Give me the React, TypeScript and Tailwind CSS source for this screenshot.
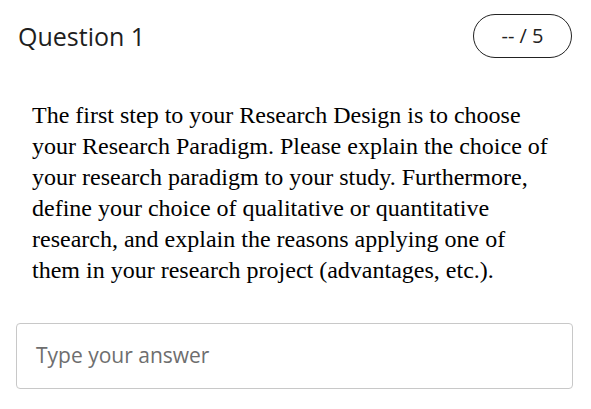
export default function App() {
  const lines = [
    "The first step to your Research Design is to choose",
    "your Research Paradigm. Please explain the choice of",
    "your research paradigm to your study. Furthermore,",
    "define your choice of qualitative or quantitative",
    "research, and explain the reasons applying one of",
    "them in your research project (advantages, etc.).",
  ];
  return (
    <div className="w-[591px] h-[409px] bg-white overflow-hidden relative">
      <div className="flex items-center justify-between pl-[18px] pr-[19px] pt-[14px]">
        <div className="text-[25px] leading-[44px] font-medium text-[#1e1e1e] font-['Open_Sans',sans-serif]">Question 1</div>
        <div className="w-[99px] h-[44px] border-[1.5px] border-[#222] rounded-full flex items-center justify-center text-[20px] text-[#222] font-['Open_Sans',sans-serif]">-- / 5</div>
      </div>
      <div className="pl-[32px] pt-[42px] text-[24px] leading-[31px] text-black font-['Liberation_Serif',serif] whitespace-nowrap">
        {lines.map((l) => (
          <div key={l}>{l}</div>
        ))}
      </div>
      <div className="ml-[16px] mt-[37px] w-[557px] h-[66px] border border-[#c8c8c8] rounded-[4px] flex items-center pl-[19px] text-[21px] text-[#6e6e6e] font-['Open_Sans',sans-serif]">
        Type your answer
      </div>
    </div>
  );
}
